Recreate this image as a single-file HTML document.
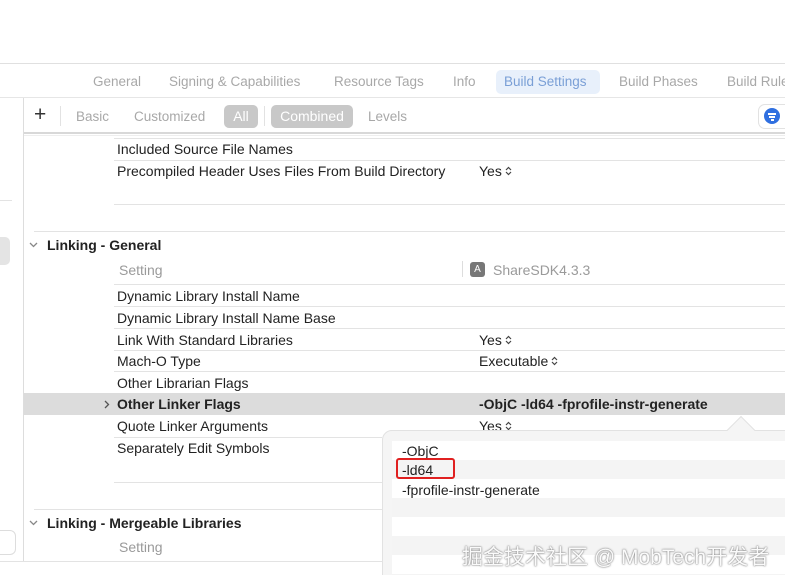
<!DOCTYPE html>
<html><head><style>
*{margin:0;padding:0;box-sizing:border-box}
body{width:785px;height:585px;overflow:hidden;background:#fff;position:relative;font-family:"Liberation Sans","Noto Sans CJK SC",sans-serif;font-size:14px;color:#222}
.a{position:absolute;white-space:nowrap}
.l{position:absolute;height:1px;background:#e3e3e3}
.g{color:#9a9a9a}
.t{color:#a8a8a8;font-size:13.5px}
svg.ud{width:7px;height:10px;vertical-align:0px;margin-left:3px}
</style></head><body>
<div class="l" style="left:0;width:785px;top:63px;background:#e0e0e0"></div>
<div class="l" style="left:0;top:97px;width:785px;background:#e6e6e6"></div>
<div class="a t" style="left:93px;top:74px">General</div>
<div class="a t" style="left:169px;top:74px">Signing &amp; Capabilities</div>
<div class="a t" style="left:334px;top:74px">Resource Tags</div>
<div class="a t" style="left:453px;top:74px">Info</div>
<div class="a" style="left:496px;top:70px;width:104px;height:24px;background:#e8f0fb;border-radius:5px"></div>
<div class="a" style="left:504px;top:74px;color:#7a9fd6;font-size:13.5px">Build Settings</div>
<div class="a t" style="left:619px;top:74px">Build Phases</div>
<div class="a t" style="left:727px;top:74px">Build Rules</div>
<!-- sidebar -->
<div class="a" style="left:23px;top:98px;width:1px;height:464px;background:#ddd"></div>
<div class="l" style="left:0;top:200px;width:12px"></div>
<div class="a" style="left:-6px;top:237px;width:16px;height:28px;background:#e4e4e4;border-radius:5px"></div>
<div class="a" style="left:-6px;top:530px;width:22px;height:25px;border:1px solid #ddd;border-radius:6px"></div>
<div class="l" style="left:0;top:561px;width:382px"></div>
<!-- toolbar -->
<div class="a" style="left:34px;top:103px;font-size:21px;color:#333">+</div>
<div class="a" style="left:60px;top:106px;width:1px;height:20px;background:#e2e2e2"></div>
<div class="a t" style="left:76px;top:109px">Basic</div>
<div class="a t" style="left:134px;top:109px">Customized</div>
<div class="a" style="left:224px;top:105px;width:34px;height:23px;background:#c8c8c8;border-radius:5px;color:#fff;text-align:center;line-height:23px">All</div>
<div class="a" style="left:264px;top:106px;width:1px;height:20px;background:#e2e2e2"></div>
<div class="a" style="left:271px;top:105px;width:82px;height:23px;background:#c8c8c8;border-radius:5px;color:#fff;text-align:center;line-height:23px">Combined</div>
<div class="a t" style="left:368px;top:109px">Levels</div>
<div class="a" style="left:758px;top:104px;width:40px;height:25px;border:1px solid #e2e2e2;border-radius:7px"></div>
<div class="a" style="left:764px;top:108px;width:16px;height:16px;border-radius:50%;background:#2f6fe0"></div>
<div class="a" style="left:768px;top:113px;width:8px;height:1.5px;background:#fff"></div>
<div class="a" style="left:769px;top:116px;width:6px;height:1.5px;background:#fff"></div>
<div class="a" style="left:771px;top:119px;width:3px;height:1.5px;background:#fff"></div>
<div class="l" style="left:24px;top:132px;width:761px;height:2px;background:#d8d8d8"></div>
<div class="l" style="left:24px;top:135px;width:761px;background:#eee"></div>
<!-- rows -->
<div class="l" style="left:114px;top:138px;width:671px"></div>
<div class="a" style="left:117px;top:141px">Included Source File Names</div>
<div class="l" style="left:114px;top:160px;width:671px"></div>
<div class="a" style="left:117px;top:163px">Precompiled Header Uses Files From Build Directory</div>
<div class="a" style="left:479px;top:163px">Yes<svg class="ud" viewBox="0 0 7 10"><path d="M1 4L3.5 1.5L6 4M1 6L3.5 8.5L6 6" fill="none" stroke="#444" stroke-width="1.2"/></svg></div>
<div class="l" style="left:114px;top:204px;width:671px"></div>
<div class="l" style="left:34px;top:231px;width:751px"></div>
<svg class="a" style="left:29px;top:242px" width="9" height="6" viewBox="0 0 9 6"><path d="M1 1L4.5 4.5L8 1" fill="none" stroke="#888" stroke-width="1.3"/></svg>
<div class="a" style="left:47px;top:237px;font-weight:bold">Linking - General</div>
<div class="a g" style="left:119px;top:262px">Setting</div>
<div class="a" style="left:462px;top:261px;width:1px;height:16px;background:#ddd"></div>
<div class="a" style="left:470px;top:262px;width:15px;height:15px;background:#777;border-radius:3px;color:#fff;font-size:10px;text-align:center;line-height:15px">A</div>
<div class="a g" style="left:493px;top:262px">ShareSDK4.3.3</div>
<div class="l" style="left:114px;top:284px;width:671px"></div>
<div class="a" style="left:117px;top:288px">Dynamic Library Install Name</div>
<div class="l" style="left:114px;top:306px;width:671px"></div>
<div class="a" style="left:117px;top:310px">Dynamic Library Install Name Base</div>
<div class="l" style="left:114px;top:328px;width:671px"></div>
<div class="a" style="left:117px;top:332px">Link With Standard Libraries</div>
<div class="a" style="left:479px;top:332px">Yes<svg class="ud" viewBox="0 0 7 10"><path d="M1 4L3.5 1.5L6 4M1 6L3.5 8.5L6 6" fill="none" stroke="#444" stroke-width="1.2"/></svg></div>
<div class="l" style="left:114px;top:350px;width:671px"></div>
<div class="a" style="left:117px;top:353px">Mach-O Type</div>
<div class="a" style="left:479px;top:353px">Executable<svg class="ud" viewBox="0 0 7 10"><path d="M1 4L3.5 1.5L6 4M1 6L3.5 8.5L6 6" fill="none" stroke="#444" stroke-width="1.2"/></svg></div>
<div class="l" style="left:114px;top:371px;width:671px"></div>
<div class="a" style="left:117px;top:375px">Other Librarian Flags</div>
<div class="a" style="left:24px;top:393px;width:761px;height:22px;background:#dcdcdc"></div>
<svg class="a" style="left:104px;top:400px" width="6" height="9" viewBox="0 0 6 9"><path d="M1 1L4.5 4.5L1 8" fill="none" stroke="#555" stroke-width="1.3"/></svg>
<div class="a" style="left:117px;top:396px;font-weight:bold">Other Linker Flags</div>
<div class="a" style="left:479px;top:396px;font-weight:bold">-ObjC -ld64 -fprofile-instr-generate</div>
<div class="a" style="left:117px;top:418px">Quote Linker Arguments</div>
<div class="a" style="left:479px;top:418px">Yes<svg class="ud" viewBox="0 0 7 10"><path d="M1 4L3.5 1.5L6 4M1 6L3.5 8.5L6 6" fill="none" stroke="#444" stroke-width="1.2"/></svg></div>
<div class="l" style="left:114px;top:437px;width:268px"></div>
<div class="a" style="left:117px;top:440px">Separately Edit Symbols</div>
<div class="l" style="left:114px;top:482px;width:268px"></div>
<div class="l" style="left:34px;top:509px;width:348px"></div>
<svg class="a" style="left:29px;top:520px" width="9" height="6" viewBox="0 0 9 6"><path d="M1 1L4.5 4.5L8 1" fill="none" stroke="#888" stroke-width="1.3"/></svg>
<div class="a" style="left:47px;top:515px;font-weight:bold">Linking - Mergeable Libraries</div>
<div class="a g" style="left:119px;top:539px">Setting</div>
<!-- popover -->
<div class="a" style="left:0;top:0;width:785px;height:575px;overflow:hidden">
<div class="a" style="left:382px;top:430px;width:420px;height:160px;background:#f5f5f5;border:1px solid #e2e2e2;border-radius:10px"></div>
<div class="a" style="left:731px;top:420px;width:20px;height:20px;background:#f5f5f5;transform:rotate(45deg);border-left:1px solid #e2e2e2;border-top:1px solid #e2e2e2"></div>
<div class="a" style="left:392px;top:441px;width:393px;height:134px;background:repeating-linear-gradient(#fff 0,#fff 19px,#f4f4f4 19px,#f4f4f4 38px)"></div>
</div>
<div class="a" style="left:402px;top:443px">-ObjC</div>
<div class="a" style="left:402px;top:462px">-ld64</div>
<div class="a" style="left:396px;top:458px;width:59px;height:21px;border:2px solid #e02020;border-radius:3px"></div>
<div class="a" style="left:402px;top:482px">-fprofile-instr-generate</div>
<div class="a" style="left:462px;top:541px;font-size:21px;color:#fafafa;text-shadow:0 0 2px #888,0 0 1px #666">掘金技术社区 @ MobTech开发者</div>
</body></html>
